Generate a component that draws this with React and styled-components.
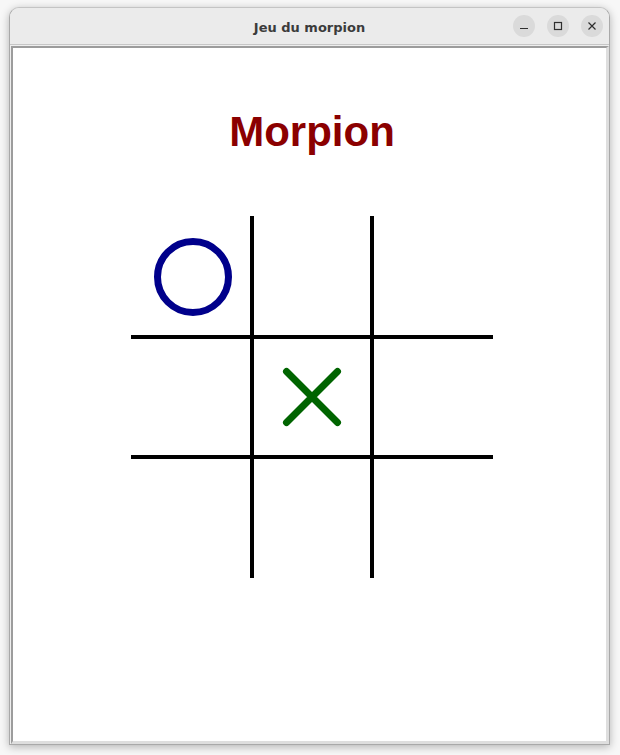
import * as React from 'react';
import styled, { createGlobalStyle } from 'styled-components';

const GlobalStyle = createGlobalStyle`
  html, body {
    margin: 0;
    padding: 0;
    background: #f7f7f7;
  }
`;

const Page = styled.div`
  padding: 7px 10px 10px 9px;
`;

const Window = styled.div`
  width: 601px;
  height: 738px;
  box-sizing: border-box;
  display: flex;
  flex-direction: column;
  border: 1px solid #a9a9a9;
  border-top-color: #c4c4c4;
  border-radius: 10px 10px 0 0;
  overflow: hidden;
  background: #ececec;
  box-shadow: 0 2px 9px rgba(0, 0, 0, 0.28);
`;

const TitleBar = styled.div`
  height: 36px;
  flex: none;
  display: grid;
  grid-template-columns: 1fr auto 1fr;
  align-items: center;
  background: #ebebeb;
  border-bottom: 1px solid #c6c6c6;
  padding: 0 6px 0 6px;
`;

const Title = styled.div`
  grid-column: 2;
  font-family: "DejaVu Sans", "Noto Sans", sans-serif;
  font-weight: 700;
  font-size: 13px;
  color: #3b3b3b;
  padding-top: 2px;
`;

const Controls = styled.div`
  grid-column: 3;
  justify-self: end;
  display: flex;
  gap: 12px;
`;

const ControlButton = styled.div`
  width: 22px;
  height: 22px;
  border-radius: 50%;
  background: #dadada;
  display: flex;
  align-items: center;
  justify-content: center;
`;

const FrameBody = styled.div`
  flex: 1;
  display: flex;
  padding: 1px 0 0 1px;
  background: #eeeeee;
`;

const Panel = styled.div`
  flex: 1;
  display: flex;
  flex-direction: column;
  align-items: center;
  background: #ffffff;
  border-top: 2px solid #9c9c9c;
  border-left: 2px solid #9c9c9c;
  border-right: 3px solid #dedede;
  border-bottom: 3px solid #dedede;
  padding: 60px 0 0 5px;
`;

const Heading = styled.h1`
  margin: 0;
  font-family: "Liberation Sans", Arial, sans-serif;
  font-weight: 700;
  font-size: 42px;
  line-height: 48px;
  color: #8b0000;
`;

const Board = styled.div`
  margin-top: 60px;
  display: grid;
  grid-template-columns: 119px 124px 119px;
  grid-template-rows: 119px 124px 119px;
`;

const Cell = styled.div`
  box-sizing: border-box;
  display: flex;
  align-items: center;
  justify-content: center;
  border-style: solid;
  border-color: #000000;
  border-width: ${(p) => (p.$midRow ? '4px' : '0')} ${(p) => (p.$midCol ? '4px' : '0')};
  padding: ${(p) => (p.$nudge ? '3px 0 0 4px' : '0')};
`;

const MinimizeIcon = () => (
  <svg width="22" height="22" viewBox="0 0 22 22">
    <line x1="7" y1="13.5" x2="15" y2="13.5" stroke="#2e2e2e" strokeWidth="1.2" />
  </svg>
);

const MaximizeIcon = () => (
  <svg width="22" height="22" viewBox="0 0 22 22">
    <rect x="7.5" y="7.5" width="7" height="7" fill="none" stroke="#2e2e2e" strokeWidth="1.2" />
  </svg>
);

const CloseIcon = () => (
  <svg width="22" height="22" viewBox="0 0 22 22">
    <path d="M7.5 7.5 L14.5 14.5 M14.5 7.5 L7.5 14.5" stroke="#2e2e2e" strokeWidth="1.2" />
  </svg>
);

const Nought = () => (
  <svg width="80" height="80" viewBox="0 0 80 80">
    <circle cx="40" cy="40" r="35.5" fill="none" stroke="#00008b" strokeWidth="7" />
  </svg>
);

const Cross = () => (
  <svg width="60" height="60" viewBox="0 0 60 60">
    <path
      d="M4.5 4.5 L55.5 55.5 M55.5 4.5 L4.5 55.5"
      stroke="#006400"
      strokeWidth="7"
      strokeLinecap="round"
    />
  </svg>
);

const board = [
  'O', '', '',
  '', 'X', '',
  '', '', '',
];

const App = () => {
  return (
    <>
      <GlobalStyle />
      <Page>
        <Window>
          <TitleBar>
            <Title>Jeu du morpion</Title>
            <Controls>
              <ControlButton><MinimizeIcon /></ControlButton>
              <ControlButton><MaximizeIcon /></ControlButton>
              <ControlButton><CloseIcon /></ControlButton>
            </Controls>
          </TitleBar>
          <FrameBody>
            <Panel>
              <Heading>Morpion</Heading>
              <Board>
                {board.map((mark, i) => {
                  const row = Math.floor(i / 3);
                  const col = i % 3;
                  return (
                    <Cell
                      key={i}
                      $midRow={row === 1}
                      $midCol={col === 1}
                      $nudge={mark === 'O'}
                    >
                      {mark === 'O' && <Nought />}
                      {mark === 'X' && <Cross />}
                    </Cell>
                  );
                })}
              </Board>
            </Panel>
          </FrameBody>
        </Window>
      </Page>
    </>
  );
};

export default App;
